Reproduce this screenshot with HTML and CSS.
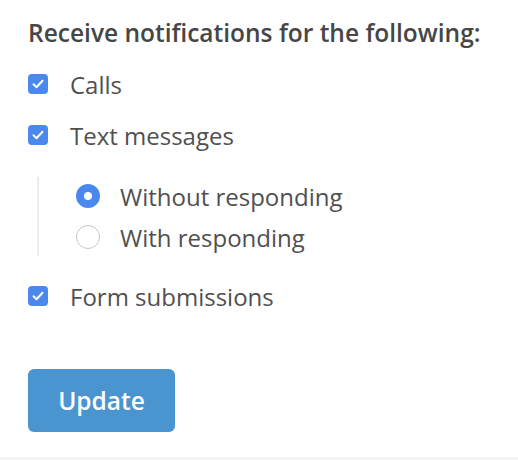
FILE: index.html
```html
<!DOCTYPE html>
<html>
<head>
<meta charset="utf-8">
<link rel="stylesheet" href="styles.css">
</head>
<body>
<div class="page">
  <form class="prefs">
    <h2 class="title">Receive notifications for the following:</h2>
    <label class="check-row">
      <span class="box"><svg viewBox="0 0 20 20" width="20" height="20"><path d="M5.5 10.2l3 3 6-6.4" fill="none" stroke="#fff" stroke-width="2" stroke-linecap="round" stroke-linejoin="round"/></svg></span>
      <span class="label">Calls</span>
    </label>
    <label class="check-row">
      <span class="box"><svg viewBox="0 0 20 20" width="20" height="20"><path d="M5.5 10.2l3 3 6-6.4" fill="none" stroke="#fff" stroke-width="2" stroke-linecap="round" stroke-linejoin="round"/></svg></span>
      <span class="label">Text messages</span>
    </label>
    <div class="sub">
      <label class="radio-row">
        <span class="radio on"></span>
        <span class="label">Without responding</span>
      </label>
      <label class="radio-row">
        <span class="radio"></span>
        <span class="label">With responding</span>
      </label>
    </div>
    <label class="check-row after-sub">
      <span class="box"><svg viewBox="0 0 20 20" width="20" height="20"><path d="M5.5 10.2l3 3 6-6.4" fill="none" stroke="#fff" stroke-width="2" stroke-linecap="round" stroke-linejoin="round"/></svg></span>
      <span class="label">Form submissions</span>
    </label>
    <button type="button" class="btn">Update</button>
  </form>
</div>
</body>
</html>
```
FILE: styles.css
```css
html, body {
  margin: 0;
  padding: 0;
  background: #f4f4f4;
}
.page {
  background: #fff;
  height: 457px;
  font-family: "Open Sans", Lato, sans-serif;
  color: #4a4a4a;
}
.prefs {
  padding: 18px 0 0 28px;
  display: flex;
  flex-direction: column;
}
.title {
  margin: 0;
  font-size: 24.5px;
  font-weight: 600;
  line-height: 30px;
  color: #464646;
}
.check-row {
  display: flex;
  align-items: center;
  height: 30px;
  margin-top: 21px;
}
.box {
  width: 20px;
  height: 20px;
  border-radius: 4px;
  background: #4a88ee;
  display: flex;
  flex: none;
}
.label {
  font-size: 24px;
  margin-left: 22px;
  color: #505050;
}
.sub {
  margin: 27px 0 0 9px;
  padding: 4px 0 4px 37px;
  border-left: 2px solid #ececec;
  display: flex;
  flex-direction: column;
  gap: 11px;
}
.radio-row {
  display: flex;
  align-items: center;
  height: 30px;
}
.radio {
  width: 24px;
  height: 24px;
  border-radius: 50%;
  box-sizing: border-box;
  border: 1.5px solid #c8c8c8;
  background: #fff;
  flex: none;
}
.radio.on {
  border: 8.5px solid #4a88ee;
  background: #fff;
}
.radio-row .label {
  margin-left: 20px;
}
.check-row.after-sub {
  margin-top: 25px;
}
.btn {
  align-self: flex-start;
  margin-top: 58px;
  width: 147px;
  height: 63px;
  border: none;
  border-radius: 6px;
  background: #4a94d0;
  color: #fff;
  font-family: inherit;
  font-size: 24.5px;
  font-weight: 600;
}
```
